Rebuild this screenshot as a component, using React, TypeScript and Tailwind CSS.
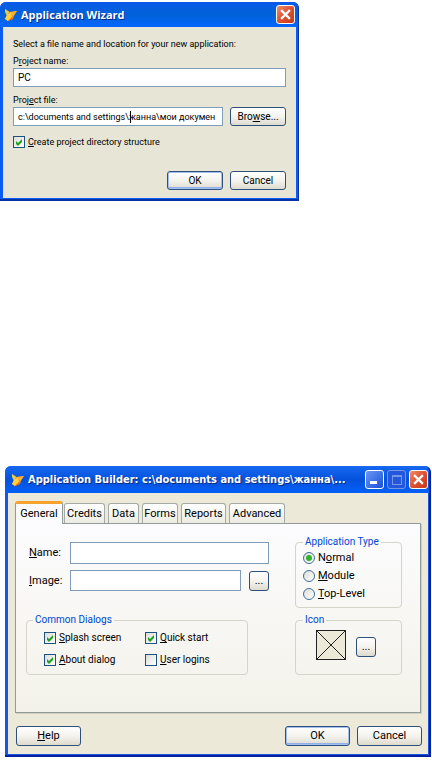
import type { ReactNode } from "react";

const BUTTON =
  "rounded-[3px] border border-[#2f4f7c] bg-gradient-to-b from-white via-[#f4f3ee] to-[#dedbce] text-center leading-4";
const BUTTON_DEFAULT =
  "rounded-[3px] border border-[#2f4f7c] bg-gradient-to-b from-white via-[#f4f3ee] to-[#dedbce] text-center leading-4 shadow-[inset_0_0_0_1px_#a3bff0,inset_0_-2px_#8fb0ea]";
const FIELD = "block w-full min-w-0 border border-[#7f9db9] bg-white px-1 outline-none";

function FoxIcon() {
  return (
    <svg className="h-[14px] w-[14px] shrink-0" viewBox="0 0 14 14" aria-hidden="true">
      <path d="M1 1l5 3 7-1-3 5-1 3-5 2-3-2 2-4z" fill="#f08a24" />
      <path d="M1 1l4 3-2 4-2-4z" fill="#d8d060" />
      <path d="M6 4l7-1-4 5z" fill="#ffb02e" />
      <path d="M3 7l4-3 1 5-4 4-3-2z" fill="#ffd23c" />
      <path d="M4 13l4-4 1 2z" fill="#e8681c" />
    </svg>
  );
}

function CloseButton() {
  return (
    <button
      type="button"
      aria-label="Close"
      className="flex h-[19px] w-[19px] shrink-0 items-center justify-center rounded-[3px] border border-white bg-gradient-to-br from-[#ee8c6c] via-[#dd5030] to-[#c53a18]"
    >
      <svg className="h-[11px] w-[11px]" viewBox="0 0 10 10" aria-hidden="true">
        <path d="M1 1l8 8M9 1l-8 8" stroke="#fff" strokeWidth="2" />
      </svg>
    </button>
  );
}

function Check({ label, checked = false }: { label: ReactNode; checked?: boolean }) {
  return (
    <label className="flex items-center gap-[3px] leading-[14px] whitespace-nowrap">
      <span className="relative flex h-3 w-3 shrink-0">
        <input
          type="checkbox"
          defaultChecked={checked}
          className="peer h-3 w-3 appearance-none border border-[#1c5180] bg-gradient-to-br from-[#dcdcd7] to-white"
        />
        <svg
          className="pointer-events-none absolute inset-0 hidden h-3 w-3 peer-checked:block"
          viewBox="0 0 12 12"
          aria-hidden="true"
        >
          <path d="M3 5l2 2 4-4v3l-4 4-2-2z" fill="#21a121" />
        </svg>
      </span>
      <span>{label}</span>
    </label>
  );
}

function Radio({ label, checked = false }: { label: ReactNode; checked?: boolean }) {
  return (
    <label className="flex h-[18px] items-center gap-[3px] whitespace-nowrap">
      <span className="relative flex h-3 w-3 shrink-0">
        <input
          type="radio"
          name="app-type"
          defaultChecked={checked}
          className="peer h-3 w-3 appearance-none rounded-full border border-[#3f6d96] bg-gradient-to-br from-[#dcdcd7] to-white"
        />
        <span className="pointer-events-none absolute inset-[3px] hidden rounded-full bg-[#2fb32f] peer-checked:block" />
      </span>
      <span>{label}</span>
    </label>
  );
}

function Wizard() {
  return (
    <section className="w-full max-w-[299px] overflow-hidden rounded-t-md border-r border-b-2 border-[#0831a8] bg-[#0b5cf0] pb-px text-[9px]">
      <header className="flex h-[25px] items-center gap-[3px] bg-gradient-to-b from-[#0a5ae8] via-[#0262d8] to-[#0466ff] pr-[3px] pl-1">
        <FoxIcon />
        <h1 className="flex-1 font-['Open_Sans',sans-serif] text-[11px] font-bold text-white [text-shadow:1px_1px_#0a2a80]">
          Application Wizard
        </h1>
        <CloseButton />
      </header>
      <div className="mr-0.5 ml-[3px] bg-[#e6e5d6] px-[10px] pt-2 pb-2">
        <p className="h-[17px] leading-[18px] whitespace-nowrap">
          Select a file name and location for your new application:
        </p>
        <label htmlFor="project-name" className="block h-4 leading-[18px]">
          P<u>r</u>oject name:
        </label>
        <input id="project-name" defaultValue="PC" className={`${FIELD} h-[19px] text-[10px]`} />
        <label htmlFor="project-file" className="mt-1 block h-4 leading-[18px]">
          Proj<u>e</u>ct file:
        </label>
        <div className="flex gap-[7px]">
          <div className="relative min-w-0 flex-1">
            <input
              id="project-file"
              defaultValue="c:\documents and settings\жанна\мои докумен"
              className={`${FIELD} h-[19px]`}
            />
            <span className="absolute top-1 left-[117px] h-3 w-px bg-black" />
          </div>
          <button type="button" className={`${BUTTON} h-[19px] w-14 text-[10px]`}>
            Bro<u>w</u>se...
          </button>
        </div>
        <div className="mt-[9px]">
          <Check checked label={<><u>C</u>reate project directory structure</>} />
        </div>
        <div className="mt-[22px] flex justify-end gap-[7px] text-[10px]">
          <button type="button" className={`${BUTTON_DEFAULT} h-[19px] w-14`}>
            OK
          </button>
          <button type="button" className={`${BUTTON} h-[19px] w-14`}>
            Cancel
          </button>
        </div>
      </div>
    </section>
  );
}

const TABS = [
  { name: "Credits", width: "w-[41px]" },
  { name: "Data", width: "w-[31px]" },
  { name: "Forms", width: "w-9" },
  { name: "Reports", width: "w-[45px]" },
  { name: "Advanced", width: "w-14" },
];

function Builder() {
  return (
    <section className="overflow-hidden rounded-t-md border-r-2 border-b-2 border-[#0422a0] bg-[#1a56e0] pb-px text-[11px]">
      <header className="flex h-[27px] items-center gap-0.5 bg-gradient-to-b from-[#1668f0] via-[#0452dc] to-[#0460f8] pr-px pl-[6px]">
        <FoxIcon />
        <h1 className="min-w-0 flex-1 overflow-hidden pl-px font-['DejaVu_Sans_Condensed','Noto_Sans',sans-serif] text-[11px] font-bold whitespace-nowrap text-white [text-shadow:1px_1px_#0a2a80]">
          Application Builder: c:\documents and settings\жанна\...
        </h1>
        <button
          type="button"
          aria-label="Minimize"
          className="flex h-[19px] w-[19px] shrink-0 items-end rounded-[3px] border border-white bg-gradient-to-br from-[#6a96f4] to-[#1c50d8] pb-1 pl-1"
        >
          <span className="h-[3px] w-[7px] bg-white" />
        </button>
        <button
          type="button"
          aria-label="Maximize"
          disabled
          className="mx-px flex h-[19px] w-[19px] shrink-0 items-center justify-center rounded-[3px] border border-[#7796e8] bg-[#2458dc]"
        >
          <span className="h-[10px] w-[10px] border border-t-2 border-[#7796e8]" />
        </button>
        <CloseButton />
      </header>
      <div className="mr-px ml-[3px] bg-[#ece9d8] px-[7px] pt-[7px] pb-2">
        <div role="tablist" className="flex h-[23px] items-end gap-[3px]">
          <button
            type="button"
            role="tab"
            aria-selected="true"
            className="relative -mr-0.5 -mb-px h-[23px] w-12 rounded-t-[3px] border border-t-[3px] border-b-0 border-[#919b9c] border-t-[#f5a32c] bg-[#fcfcfe]"
          >
            General
          </button>
          {TABS.map((tab) => (
            <button
              key={tab.name}
              type="button"
              role="tab"
              aria-selected="false"
              className={`${tab.width} h-5 rounded-t-[3px] border border-b-0 border-[#a5aca8] bg-gradient-to-b from-white to-[#ebebe2]`}
            >
              {tab.name}
            </button>
          ))}
        </div>
        <div className="flex h-[190px] justify-between border border-[#919b9c] bg-gradient-to-b from-[#fcfcfe] to-[#f3f2ea] pt-[18px] pr-[18px] pl-[10px] shadow-[1px_1px_#d0cebf]">
          <div className="w-[243px]">
            <div className="flex items-center">
              <label htmlFor="app-name" className="w-11 pl-[3px]">
                <u>N</u>ame:
              </label>
              <input id="app-name" className={`${FIELD} h-[22px] flex-1`} />
            </div>
            <div className="mt-[6px] flex items-center">
              <label htmlFor="app-image" className="w-11 pl-[3px]">
                <u>I</u>mage:
              </label>
              <input id="app-image" className={`${FIELD} h-[21px] flex-1`} />
              <button type="button" aria-label="Browse image" className={`${BUTTON} ml-2 h-5 w-5`}>
                ...
              </button>
            </div>
            <fieldset className="mt-[22px] h-[62px] w-[222px] rounded-[4px] border border-[#d5d4c8] pl-[17px] text-[10px]">
              <legend className="-ml-[11px] px-0.5 leading-[14px] text-[#0046d5]">
                Common Dialogs
              </legend>
              <div className="grid grid-cols-[101px_1fr] gap-y-2 pt-1">
                <Check checked label={<><u>S</u>plash screen</>} />
                <Check checked label={<><u>Q</u>uick start</>} />
                <Check checked label={<><u>A</u>bout dialog</>} />
                <Check label={<><u>U</u>ser logins</>} />
              </div>
            </fieldset>
          </div>
          <div className="w-[107px]">
            <fieldset className="-mt-[7px] h-[73px] rounded-[4px] border border-[#d5d4c8] pl-[7px]">
              <legend className="px-0.5 text-[10px] leading-[14px] text-[#0046d5]">
                Application Type
              </legend>
              <Radio checked label={<>N<u>o</u>rmal</>} />
              <Radio label={<><u>M</u>odule</>} />
              <Radio label={<><u>T</u>op-Level</>} />
            </fieldset>
            <fieldset className="mt-[5px] h-[62px] rounded-[4px] border border-[#d5d4c8] pl-[7px]">
              <legend className="px-0.5 text-[10px] leading-[14px] text-[#0046d5]">Icon</legend>
              <div className="flex items-center gap-[10px] pt-[3px] pl-[13px]">
                <svg className="h-[30px] w-[30px]" viewBox="0 0 30 30" aria-hidden="true">
                  <rect x="0.5" y="0.5" width="29" height="29" fill="#ece9d8" stroke="#222" />
                  <path d="M1 1l28 28M29 1L1 29" stroke="#222" />
                </svg>
                <button type="button" aria-label="Browse icon" className={`${BUTTON} mt-1 h-5 w-5`}>
                  ...
                </button>
              </div>
            </fieldset>
          </div>
        </div>
        <div className="-mr-px flex gap-[7px] pt-[13px] pl-px">
          <button type="button" className={`${BUTTON} mr-auto h-5 w-[65px]`}>
            <u>H</u>elp
          </button>
          <button type="button" className={`${BUTTON_DEFAULT} h-5 w-[65px]`}>
            OK
          </button>
          <button type="button" className={`${BUTTON} h-5 w-[65px]`}>
            Cancel
          </button>
        </div>
      </div>
    </section>
  );
}

export default function App() {
  return (
    <main className="min-h-screen bg-white pt-0.5 font-[Roboto,'Liberation_Sans',sans-serif] leading-[14px] text-black">
      <Wizard />
      <div className="mt-[265px] pr-px pl-[5px]">
        <Builder />
      </div>
    </main>
  );
}
